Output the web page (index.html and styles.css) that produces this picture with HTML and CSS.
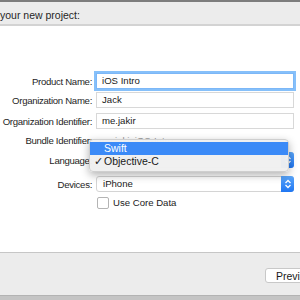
FILE: index.html
```html
<!DOCTYPE html>
<html lang="en">
<head>
    <meta charset="UTF-8">
    <title>New Project Options</title>
    <link rel="stylesheet" href="styles.css">
</head>
<body>
    <div class="window">
        <div class="topline"></div>
        <div class="header">your new project:</div>
        <div class="content">
            <div class="row row-product">
                <label class="label">Product Name:</label>
                <div class="field focused">iOS Intro</div>
            </div>
            <div class="row row-org">
                <label class="label">Organization Name:</label>
                <div class="field">Jack</div>
            </div>
            <div class="row row-orgid">
                <label class="label">Organization Identifier:</label>
                <div class="field">me.jakir</div>
            </div>
            <div class="row row-bundle">
                <label class="label">Bundle Identifier:</label>
                <div class="static">me.jakir.iOS-Intro</div>
            </div>
            <div class="row row-lang">
                <label class="label">Language:</label>
                <div class="popup">
                    <span>Objective-C</span>
                    <span class="stepper"><svg width="8" height="10" viewBox="0 0 8 10"><path d="M1.5 4 L4 1.5 L6.5 4 M1.5 6 L4 8.5 L6.5 6" fill="none" stroke="#fff" stroke-width="1.3"/></svg></span>
                </div>
            </div>
            <div class="row row-devices">
                <label class="label">Devices:</label>
                <div class="popup">
                    <span>iPhone</span>
                    <span class="stepper"><svg width="8" height="10" viewBox="0 0 8 10"><path d="M1.5 4 L4 1.5 L6.5 4 M1.5 6 L4 8.5 L6.5 6" fill="none" stroke="#fff" stroke-width="1.3"/></svg></span>
                </div>
            </div>
            <div class="row row-check">
                <span></span>
                <div class="check">
                    <span class="box"></span>
                    <span>Use Core Data</span>
                </div>
            </div>

            <div class="menu">
                <div class="menu-item selected"><span class="tick"></span>Swift</div>
                <div class="menu-item"><span class="tick">✓</span>Objective-C</div>
            </div>
        </div>
        <div class="footer">
            <button class="btn">Previous</button>
        </div>
        <div class="bottomline"></div>
    </div>
</body>
</html>
```

FILE: styles.css
```css
body {
    margin: 0;
    font-family: 'Liberation Sans', Arial, sans-serif;
    color: #1b1b1b;
    background: #ececec;
}
.window {
    width: 300px;
    height: 300px;
    display: flex;
    flex-direction: column;
    overflow: hidden;
}
.topline {
    height: 2px;
    background: #7d7d7d;
}
.header {
    height: 20px;
    padding-top: 2px;
    line-height: 22px;
    background: #ececec;
    border-bottom: 2px solid #d3d3d3;
    font-size: 10.5px;
    color: #262626;
    white-space: nowrap;
}
.content {
    flex: 1;
    position: relative;
    background: #ffffff;
    padding-top: 47px;
    font-size: 9.6px;
}
.row {
    display: grid;
    grid-template-columns: 92px 1fr;
    column-gap: 4px;
    align-items: center;
    height: 16px;
    margin-right: 6px;
}
.row-org { margin-top: 3px; }
.row-orgid { margin-top: 5px; }
.row-bundle { margin-top: 3px; }
.row-lang { margin-top: 4px; }
.row-devices { margin-top: 8px; }
.row-check { margin-top: 4px; height: 13px; }
.label {
    text-align: right;
    white-space: nowrap;
    letter-spacing: -0.3px;
    color: #1e1e1e;
}
.field {
    height: 14px;
    line-height: 14px;
    border: 1px solid #d8d8d8;
    padding-left: 5px;
    background: #fff;
    color: #1a1a1a;
}
.field.focused {
    border-color: #7cb7f7;
    box-shadow: 0 0 0 2px #86c0fa;
}
.static {
    padding-left: 3px;
    color: #9a9a9a;
}
.popup {
    position: relative;
    height: 14px;
    line-height: 14px;
    border: 1px solid #d4d4d4;
    border-radius: 3px;
    padding-left: 6px;
    background: #fff;
    color: #1a1a1a;
}
.stepper {
    position: absolute;
    top: -1px;
    right: -1px;
    width: 13px;
    height: 16px;
    border-radius: 0 3px 3px 0;
    background: linear-gradient(#5aa6fb, #1f76f2);
    display: flex;
    align-items: center;
    justify-content: center;
}
.check {
    display: flex;
    align-items: center;
    gap: 4px;
    padding-left: 1px;
}
.box {
    width: 10px;
    height: 10px;
    border: 1px solid #b4b4b4;
    border-radius: 2px;
    background: #fff;
}
.menu {
    position: absolute;
    left: 89px;
    top: 113px;
    width: 198px;
    padding: 2px 0 3px;
    background: rgba(240, 240, 240, 0.97);
    border: 1px solid #cfcfcf;
    border-radius: 4px;
    box-shadow: 0 3px 8px rgba(0, 0, 0, 0.3);
    font-size: 10.5px;
}
.menu-item {
    height: 13px;
    line-height: 13px;
    display: flex;
    color: #1a1a1a;
}
.menu-item.selected {
    background: #3b8af7;
    color: #fff;
}
.tick {
    width: 14px;
    padding-left: 4px;
    box-sizing: border-box;
}
.footer {
    height: 42px;
    border-top: 1px solid #c6c6c6;
    background: #ececec;
    display: flex;
    align-items: center;
    padding-left: 265px;
}
.btn {
    flex: none;
    height: 15px;
    width: 60px;
    padding: 0 0 0 10px;
    text-align: left;
    margin-top: 3px;
    background: #fff;
    border: 1px solid #c8c8c8;
    border-radius: 3px;
    font-family: 'Liberation Sans', Arial, sans-serif;
    font-size: 10.5px;
    color: #1a1a1a;
}
.bottomline {
    height: 4px;
    background: #c4c4c4;
    border-top: 1px solid #b3b3b3;
}
```
